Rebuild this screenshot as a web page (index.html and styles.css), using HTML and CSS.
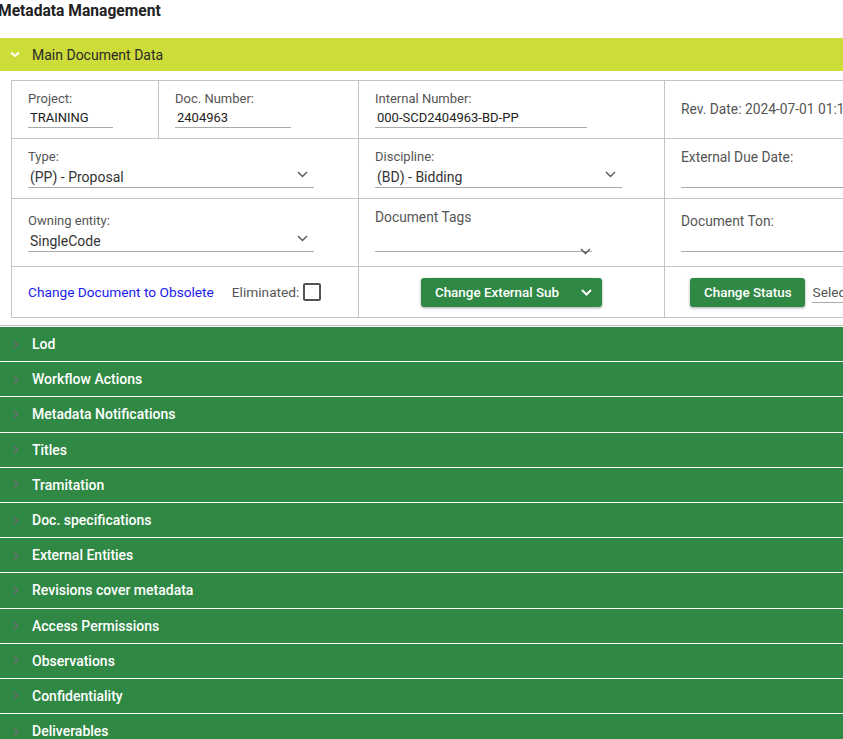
FILE: index.html
```html
<!DOCTYPE html>
<html>
<head>
<meta charset="utf-8">
<link rel="stylesheet" href="styles.css">
</head>
<body>
<div class="page">
  <h1 class="title">Metadata Management</h1>

  <div class="panel-head lime">
    <svg class="chev-down-w" width="10" height="7" viewBox="0 0 10 7"><path d="M1 1.5 L5 5 L9 1.5" fill="none" stroke="#fff" stroke-width="2"/></svg>
    <span>Main Document Data</span>
  </div>

  <div class="panel-body">
    <div class="grid">
      <div class="cell r1">
        <div class="field">
          <div class="label">Project:</div>
          <div class="input w-project">TRAINING</div>
        </div>
      </div>
      <div class="cell r1">
        <div class="field">
          <div class="label">Doc. Number:</div>
          <div class="input w-docnum">2404963</div>
        </div>
      </div>
      <div class="cell r1">
        <div class="field">
          <div class="label">Internal Number:</div>
          <div class="input w-internal">000-SCD2404963-BD-PP</div>
        </div>
      </div>
      <div class="cell r1">
        <div class="plain">Rev. Date: 2024-07-01 01:15</div>
      </div>

      <div class="cell r2 span2">
        <div class="field">
          <div class="label">Type:</div>
          <div class="select w-type"><span>(PP) - Proposal</span><svg class="sel-chev" width="11" height="7" viewBox="0 0 11 7"><path d="M1 1 L5.5 5.5 L10 1" fill="none" stroke="#555" stroke-width="1.4"/></svg></div>
        </div>
      </div>
      <div class="cell r2">
        <div class="field">
          <div class="label">Discipline:</div>
          <div class="select w-disc"><span>(BD) - Bidding</span><svg class="sel-chev" width="11" height="7" viewBox="0 0 11 7"><path d="M1 1 L5.5 5.5 L10 1" fill="none" stroke="#555" stroke-width="1.4"/></svg></div>
        </div>
      </div>
      <div class="cell r2">
        <div class="field grow">
          <div class="label big">External Due Date:</div>
          <div class="select empty"></div>
        </div>
      </div>

      <div class="cell r3 span2">
        <div class="field">
          <div class="label">Owning entity:</div>
          <div class="select w-type"><span>SingleCode</span><svg class="sel-chev" width="11" height="7" viewBox="0 0 11 7"><path d="M1 1 L5.5 5.5 L10 1" fill="none" stroke="#555" stroke-width="1.4"/></svg></div>
        </div>
      </div>
      <div class="cell r3 top">
        <div class="field">
          <div class="label big">Document Tags</div>
          <div class="tags"><svg class="tag-chev" width="11" height="7" viewBox="0 0 11 7"><path d="M1 1 L5.5 5.5 L10 1" fill="none" stroke="#555" stroke-width="1.4"/></svg></div>
        </div>
      </div>
      <div class="cell r3">
        <div class="field grow">
          <div class="label big">Document Ton:</div>
          <div class="select empty"></div>
        </div>
      </div>

      <div class="cell r4 span2">
        <a class="link" href="#">Change Document to Obsolete</a>
        <span class="elim">Eliminated:</span>
        <span class="checkbox"></span>
      </div>
      <div class="cell r4 center">
        <button class="btn">Change External Sub<svg class="btn-chev" width="11" height="7" viewBox="0 0 11 7"><path d="M1 1 L5.5 5.5 L10 1" fill="none" stroke="#fff" stroke-width="2"/></svg></button>
      </div>
      <div class="cell r4 status">
        <button class="btn">Change Status</button>
        <span class="selec">Select</span>
      </div>
    </div>
  </div>

  <div class="bars">
    <div class="bar"><svg class="chev-r" width="6" height="9" viewBox="0 0 6 9"><path d="M1 1 L4.5 4.5 L1 8" fill="none" stroke="#6e6e6e" stroke-width="1.6"/></svg><span>Lod</span></div>
    <div class="bar"><svg class="chev-r" width="6" height="9" viewBox="0 0 6 9"><path d="M1 1 L4.5 4.5 L1 8" fill="none" stroke="#6e6e6e" stroke-width="1.6"/></svg><span>Workflow Actions</span></div>
    <div class="bar"><svg class="chev-r" width="6" height="9" viewBox="0 0 6 9"><path d="M1 1 L4.5 4.5 L1 8" fill="none" stroke="#6e6e6e" stroke-width="1.6"/></svg><span>Metadata Notifications</span></div>
    <div class="bar"><svg class="chev-r" width="6" height="9" viewBox="0 0 6 9"><path d="M1 1 L4.5 4.5 L1 8" fill="none" stroke="#6e6e6e" stroke-width="1.6"/></svg><span>Titles</span></div>
    <div class="bar"><svg class="chev-r" width="6" height="9" viewBox="0 0 6 9"><path d="M1 1 L4.5 4.5 L1 8" fill="none" stroke="#6e6e6e" stroke-width="1.6"/></svg><span>Tramitation</span></div>
    <div class="bar"><svg class="chev-r" width="6" height="9" viewBox="0 0 6 9"><path d="M1 1 L4.5 4.5 L1 8" fill="none" stroke="#6e6e6e" stroke-width="1.6"/></svg><span>Doc. specifications</span></div>
    <div class="bar"><svg class="chev-r" width="6" height="9" viewBox="0 0 6 9"><path d="M1 1 L4.5 4.5 L1 8" fill="none" stroke="#6e6e6e" stroke-width="1.6"/></svg><span>External Entities</span></div>
    <div class="bar"><svg class="chev-r" width="6" height="9" viewBox="0 0 6 9"><path d="M1 1 L4.5 4.5 L1 8" fill="none" stroke="#6e6e6e" stroke-width="1.6"/></svg><span>Revisions cover metadata</span></div>
    <div class="bar"><svg class="chev-r" width="6" height="9" viewBox="0 0 6 9"><path d="M1 1 L4.5 4.5 L1 8" fill="none" stroke="#6e6e6e" stroke-width="1.6"/></svg><span>Access Permissions</span></div>
    <div class="bar"><svg class="chev-r" width="6" height="9" viewBox="0 0 6 9"><path d="M1 1 L4.5 4.5 L1 8" fill="none" stroke="#6e6e6e" stroke-width="1.6"/></svg><span>Observations</span></div>
    <div class="bar"><svg class="chev-r" width="6" height="9" viewBox="0 0 6 9"><path d="M1 1 L4.5 4.5 L1 8" fill="none" stroke="#6e6e6e" stroke-width="1.6"/></svg><span>Confidentiality</span></div>
    <div class="bar"><svg class="chev-r" width="6" height="9" viewBox="0 0 6 9"><path d="M1 1 L4.5 4.5 L1 8" fill="none" stroke="#6e6e6e" stroke-width="1.6"/></svg><span>Deliverables</span></div>
  </div>
</div>
</body>
</html>
```

FILE: styles.css
```css
html, body {
  margin: 0;
  padding: 0;
  background: #fff;
  overflow: hidden;
}
body {
  font-family: Roboto, "Liberation Sans", sans-serif;
  color: #333;
}
.page {
  width: 843px;
  height: 739px;
  overflow: hidden;
}
.title {
  margin: 0 0 16px -2px;
  font-size: 15.6px;
  line-height: 22px;
  font-weight: 700;
  color: #222;
  white-space: nowrap;
}
.panel-head {
  height: 33px;
  display: flex;
  align-items: center;
  padding-left: 10px;
  font-size: 14px;
}
.lime {
  background: #cddc39;
  color: #2a2a2a;
}
.chev-down-w {
  margin-right: 12px;
}
.panel-body {
  padding: 9px 0 7px 11px;
  border-bottom: 1px solid #c4c4c4;
}
.grid {
  display: grid;
  grid-template-columns: 146px 199px 305px 320px;
  grid-template-rows: 57px 59px 67px 50px;
  gap: 1px;
  background: #c4c4c4;
  border: 1px solid #c4c4c4;
  width: max-content;
}
.cell {
  background: #fff;
  display: flex;
  align-items: center;
  padding-left: 16px;
  min-width: 0;
  overflow: hidden;
}
.cell.span2 {
  grid-column: span 2;
}
.cell.top {
  align-items: flex-start;
  padding-top: 10px;
}
.cell.center {
  justify-content: center;
  padding-left: 0;
  overflow: visible;
}
.field {
  display: flex;
  flex-direction: column;
}
.field.grow {
  flex: 1;
}
.label {
  font-size: 13px;
  line-height: 16px;
  color: #555;
  margin-bottom: 2px;
  white-space: nowrap;
}
.label.big {
  font-size: 13.8px;
}
.input {
  border-bottom: 1px solid #aaa;
  font-size: 13px;
  line-height: 18px;
  color: #222;
  padding-left: 2px;
  box-sizing: border-box;
  height: 19px;
}
.w-project { width: 85px; }
.w-docnum { width: 116px; }
.w-internal { width: 212px; }
.plain {
  font-size: 13.8px;
  color: #555;
  white-space: nowrap;
  margin-top: -2px;
}
.select {
  height: 21px;
  box-sizing: border-box;
  border-bottom: 1px solid #aaa;
  display: flex;
  align-items: center;
  justify-content: space-between;
  font-size: 14px;
  color: #333;
  padding: 0 6px 0 2px;
}
.select .sel-chev {
  margin-top: -6px;
}
.w-type { width: 286px; }
.w-disc { width: 247px; }
.tags {
  width: 217px;
  height: 25px;
  box-sizing: border-box;
  border-bottom: 1px solid #aaa;
  position: relative;
}
.tag-chev {
  position: absolute;
  right: 1px;
  bottom: -4px;
}
.link {
  color: #1a1aee;
  text-decoration: none;
  font-size: 13.7px;
  white-space: nowrap;
}
.elim {
  margin-left: 18px;
  font-size: 13.7px;
  color: #555;
  white-space: nowrap;
}
.checkbox {
  width: 14px;
  height: 14px;
  border: 2px solid #555;
  border-radius: 2px;
  margin-left: 4px;
  flex: none;
}
.btn {
  height: 29px;
  background: #2f8844;
  color: #fff;
  border: none;
  border-radius: 3px;
  font-family: Roboto, "Liberation Sans", sans-serif;
  font-size: 13.4px;
  font-weight: 500;
  padding: 0 13px 0 14px;
  display: flex;
  align-items: center;
  box-shadow: 0 1px 3px rgba(0,0,0,0.35);
  margin-top: 1px;
  white-space: nowrap;
  flex: none;
}
.btn-chev {
  margin-left: 22px;
  margin-right: -3px;
}
.status {
  padding-left: 25px;
}
.selec {
  margin-left: 7px;
  font-size: 13.7px;
  color: #555;
  border-bottom: 1px solid #aaa;
  padding: 0 2px 2px 1px;
  margin-top: 3px;
  white-space: nowrap;
}
.bars {
  display: flex;
  flex-direction: column;
}
.bar {
  height: 34.2px;
  margin-top: 1px;
  background: #2f8844;
  color: #fff;
  display: flex;
  align-items: center;
  padding-left: 13px;
  font-size: 14px;
  font-weight: 500;
  flex: none;
}
.chev-r {
  margin-right: 13px;
}
```
